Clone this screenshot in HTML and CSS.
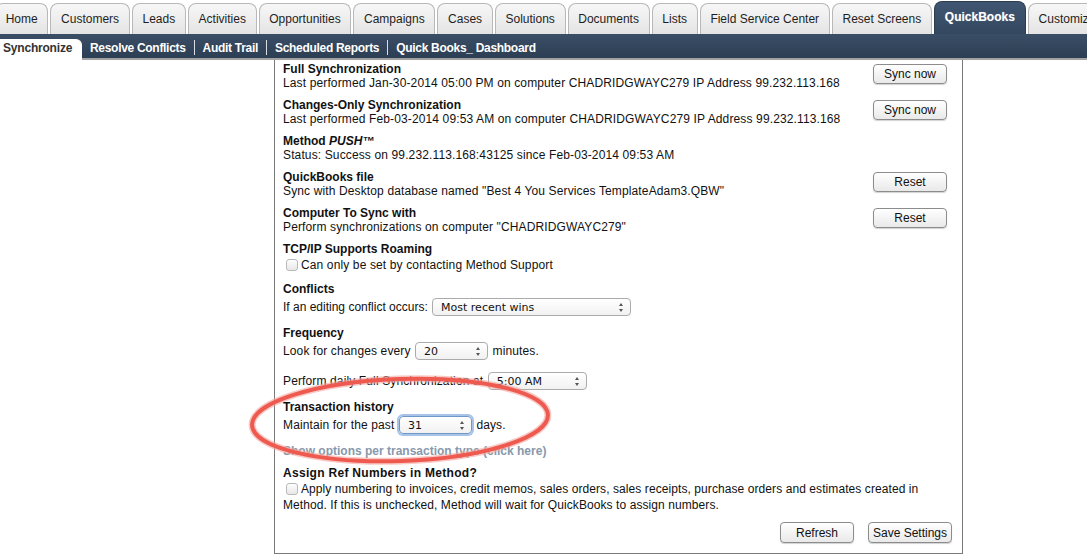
FILE: index.html
```html
<!DOCTYPE html>
<html>
<head>
<meta charset="utf-8">
<link rel="stylesheet" href="styles.css">
</head>
<body>
<div class="tabs">
  <div class="tab first">Home</div>
  <div class="tab">Customers</div>
  <div class="tab">Leads</div>
  <div class="tab">Activities</div>
  <div class="tab">Opportunities</div>
  <div class="tab">Campaigns</div>
  <div class="tab">Cases</div>
  <div class="tab">Solutions</div>
  <div class="tab">Documents</div>
  <div class="tab">Lists</div>
  <div class="tab">Field Service Center</div>
  <div class="tab">Reset Screens</div>
  <div class="tab active">QuickBooks</div>
  <div class="tab">Customize</div>
</div>
<div class="subnav">
  <div class="subtab">Synchronize</div>
  <a class="sublink">Resolve Conflicts</a><span class="sep"></span>
  <a class="sublink">Audit Trail</a><span class="sep"></span>
  <a class="sublink">Scheduled Reports</a><span class="sep"></span>
  <a class="sublink">Quick Books_ Dashboard</a>
</div>
<div class="panel">
  <div class="section row">
    <div class="info">
      <div class="title">Full Synchronization</div>
      <div class="line">Last performed Jan-30-2014 05:00 PM on computer CHADRIDGWAYC279 IP Address 99.232.113.168</div>
    </div>
    <button class="btn side">Sync now</button>
  </div>
  <div class="section row">
    <div class="info">
      <div class="title">Changes-Only Synchronization</div>
      <div class="line">Last performed Feb-03-2014 09:53 AM on computer CHADRIDGWAYC279 IP Address 99.232.113.168</div>
    </div>
    <button class="btn side">Sync now</button>
  </div>
  <div class="section">
    <div class="title">Method <i>PUSH™</i></div>
    <div class="line">Status: Success on 99.232.113.168:43125 since Feb-03-2014 09:53 AM</div>
  </div>
  <div class="section row">
    <div class="info">
      <div class="title">QuickBooks file</div>
      <div class="line">Sync with Desktop database named "Best 4 You Services TemplateAdam3.QBW"</div>
    </div>
    <button class="btn side">Reset</button>
  </div>
  <div class="section row">
    <div class="info">
      <div class="title">Computer To Sync with</div>
      <div class="line">Perform synchronizations on computer "CHADRIDGWAYC279"</div>
    </div>
    <button class="btn side">Reset</button>
  </div>
  <div class="section">
    <div class="title">TCP/IP Supports Roaming</div>
    <div class="checkline"><span class="check"></span>Can only be set by contacting Method Support</div>
  </div>
  <div class="section">
    <div class="title">Conflicts</div>
    <div class="selline tight">If an editing conflict occurs: <span class="select w-conf">Most recent wins<span class="arrows"></span></span></div>
  </div>
  <div class="section">
    <div class="title">Frequency</div>
    <div class="selline">Look for changes every <span class="select w-freq">20<span class="arrows"></span></span> minutes.</div>
  </div>
  <div class="section">
    <div class="selline">Perform daily Full Synchronization at <span class="select w-daily">5:00 AM<span class="arrows"></span></span></div>
  </div>
  <div class="section">
    <div class="title">Transaction history</div>
    <div class="selline">Maintain for the past <span class="select w-hist focus">31<span class="arrows"></span></span> days.</div>
  </div>
  <div class="section">
    <a class="optlink">Show options per transaction type (click here)</a>
  </div>
  <div class="section wide">
    <div class="title">Assign Ref Numbers in Method?</div>
    <div class="checkline"><span class="check"></span>Apply numbering to invoices, credit memos, sales orders, sales receipts, purchase orders and estimates created in</div>
    <div class="line">Method. If this is unchecked, Method will wait for QuickBooks to assign numbers.</div>
  </div>
  <div class="actions">
    <button class="btn">Refresh</button>
    <button class="btn save">Save Settings</button>
  </div>
</div>
<svg class="highlight" width="340" height="130" viewBox="0 0 340 130">
  <g transform="rotate(-2 170 60)">
    <ellipse cx="170" cy="60" rx="148" ry="41" fill="none" stroke="#f4a59f" stroke-width="7" opacity="0.6"/>
    <ellipse cx="170" cy="60" rx="148" ry="41" fill="none" stroke="#ee5a50" stroke-width="4"/>
  </g>
</svg>
</body>
</html>
```
FILE: styles.css
```css
* { box-sizing: border-box; }
body {
  margin: 0;
  background: #fff;
  font-family: "Liberation Sans", Arial, Helvetica, sans-serif;
  color: #111;
  overflow: hidden;
  width: 1087px;
  height: 560px;
  position: relative;
}
.tabs {
  display: flex;
  align-items: flex-end;
  gap: 2px;
  height: 34px;
  white-space: nowrap;
  overflow: hidden;
}
.tab {
  flex: none;
  height: 31px;
  padding: 0 9.7px 1px;
  display: flex;
  align-items: center;
  font-size: 12px;
  color: #1e1e1e;
  background: linear-gradient(#f7f7f7, #e4e4e4);
  border: 1px solid #b8b8b8;
  border-bottom: none;
  border-radius: 8px 8px 0 0;
}
.tab.first { margin-left: -5px; }
.tab.active {
  height: 33px;
  padding: 0 10px 3px;
  font-weight: bold;
  color: #fff;
  background: linear-gradient(#3f5571, #34485f);
  border-color: #2c3c50;
  text-shadow: 0 0 1px rgba(255,255,255,0.4);
}
.subnav {
  display: flex;
  align-items: flex-end;
  height: 26px;
  background: linear-gradient(#3a4e66, #2c3e53);
  border-bottom: 2px solid #a2a2a2;
}
.subtab {
  height: 21px;
  margin-bottom: -2px;
  width: 82px;
  padding-left: 3px;
  background: #fff;
  border-radius: 0 6px 0 0;
  font-size: 12px;
  font-weight: bold;
  color: #333;
  line-height: 19px;
  letter-spacing: -0.2px;
}
.sublink {
  font-size: 12px;
  font-weight: bold;
  color: #fff;
  line-height: 19px;
  height: 21px;
  margin-bottom: -2px;
  letter-spacing: -0.3px;
}
.subtab + .sublink { margin-left: 8px; }
.sep {
  width: 1px;
  height: 15px;
  background: #d8dde3;
  margin: 0 8px 3px;
}
.panel {
  margin-left: 274px;
  width: 689px;
  height: 494px;
  border: 1px solid #7a7a7a;
  border-top: none;
  padding: 2px 15px 0 8px;
  font-size: 12px;
}
.section { margin-bottom: 8px; }
.row {
  display: flex;
  justify-content: space-between;
  align-items: flex-start;
}
.title {
  font-weight: bold;
  line-height: 14px;
}
.line, .checkline, .selline { letter-spacing: 0.13px; }
.selline.tight { letter-spacing: 0; }
.line { line-height: 14px; }
.checkline {
  display: flex;
  align-items: center;
  height: 18px;
}
.check {
  flex: none;
  width: 12px;
  height: 12px;
  margin: 0 3px 0 3px;
  border: 1px solid #b9b9b9;
  border-radius: 3px;
  background: linear-gradient(#fdfdfd, #e8e8e8);
}
.selline {
  display: flex;
  align-items: center;
  height: 22px;
  white-space: pre;
}
.select {
  position: relative;
  display: inline-flex;
  align-items: center;
  height: 18px;
  margin: 0 1px;
  padding-left: 8px;
  border: 1px solid #ababab;
  border-radius: 4px;
  background: linear-gradient(#ffffff, #f1f1f1);
  font-family: "DejaVu Sans", "Liberation Sans", sans-serif;
  font-size: 11px;
  letter-spacing: 0;
  color: #111;
}
.select.focus {
  border-color: #6f98c9;
  box-shadow: 0 0 0 2px #a7c3e8;
}
.arrows {
  position: absolute;
  right: 6px;
  top: 4px;
  width: 5px;
  height: 9px;
}
.arrows::before, .arrows::after {
  content: "";
  position: absolute;
  left: 0;
  border-left: 2.5px solid transparent;
  border-right: 2.5px solid transparent;
}
.arrows::before { top: 0; border-bottom: 3px solid #555; }
.arrows::after { bottom: 0; border-top: 3px solid #555; }
.w-conf { width: 199px; }
.w-freq { width: 73px; }
.w-daily { width: 99px; }
.w-hist { width: 73px; }
.optlink {
  display: block;
  font-weight: bold;
  line-height: 14px;
  color: #8898ac;
}
.wide .title { letter-spacing: 0.3px; }
.wide .line, .wide .checkline { letter-spacing: 0.08px; }
.btn {
  flex: none;
  width: 74px;
  height: 20px;
  margin-top: 2px;
  padding: 0;
  font-family: "Liberation Sans", Arial, sans-serif;
  font-size: 12px;
  color: #111;
  border: 1px solid #8c8c8c;
  border-radius: 4px;
  background: linear-gradient(#ffffff, #e9e9e9);
  box-shadow: 0 1px 1px rgba(0,0,0,0.18);
}
.actions {
  display: flex;
  justify-content: flex-end;
  gap: 14px;
  margin-right: -5px;
  margin-top: 10px;
}
.actions .btn { height: 21px; margin-top: 0; }
.actions .save { width: 84px; }
.highlight {
  position: absolute;
  left: 230px;
  top: 360px;
}
```
